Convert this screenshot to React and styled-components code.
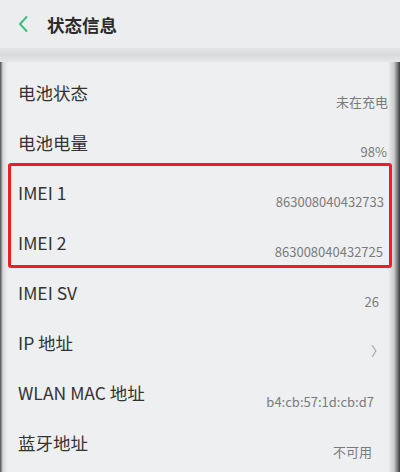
import styled, { createGlobalStyle } from 'styled-components';

const GlobalStyle = createGlobalStyle`
  html, body {
    margin: 0;
    padding: 0;
    background: #eeeff1;
  }
  body {
    font-family: "Noto Sans CJK SC", "Noto Sans", sans-serif;
  }
`;

const Screen = styled.div`
  width: 400px;
  height: 472px;
  overflow: hidden;
  background: linear-gradient(90deg, #4a4a4c 0, #d8d9db 3px, #eeeff1 8px, #eeeff1 388px, #c9cacc 394px, #3a3a3c 400px);
`;

const Header = styled.div`
  height: 48px;
  display: flex;
  align-items: center;
  padding-left: 17px;
  gap: 18px;
  background: #ecedef;
`;

const Title = styled.h1`
  margin: 0;
  font-size: 17.5px;
  font-weight: 700;
  color: #2a2a2a;
`;

const Band = styled.div`
  height: 14px;
  background: linear-gradient(180deg, #e3e4e6 0, #d9dadc 50%, #e6e7e9 100%);
`;

const List = styled.div`
  padding-top: 6px;
`;

const Group = styled.div`
  position: relative;

  &::after {
    content: '';
    position: absolute;
    top: -5px;
    bottom: 0;
    left: 8px;
    right: 8px;
    border: 3px solid #f21c24;
    border-radius: 3px;
    pointer-events: none;
  }
`;

const Row = styled.div`
  height: 50px;
  display: flex;
  justify-content: space-between;
  align-items: flex-start;
  padding: 0 ${(p) => p.$inset}px 0 18px;
`;

const Label = styled.span`
  padding-top: 13px;
  font-size: 17.5px;
  line-height: 24px;
  color: #333333;
`;

const Value = styled.span`
  margin-top: 26px;
  font-size: 13px;
  line-height: 16px;
  color: #7a7b7c;
`;

const Chevron = styled.span`
  margin-top: 25px;
  font-size: 13px;
  line-height: 16px;
  color: #9a9a9a;
`;

function BackIcon() {
  return (
    <svg width="12" height="18" viewBox="0 0 12 18">
      <path d="M9.5 2 L3 9 L9.5 16" fill="none" stroke="#3fbf7f" strokeWidth="2" strokeLinecap="round" strokeLinejoin="round" />
    </svg>
  );
}

function InfoRow({ label, value, inset = 13, arrow }) {
  return (
    <Row $inset={inset}>
      <Label>{label}</Label>
      {arrow ? <Chevron>〉</Chevron> : <Value>{value}</Value>}
    </Row>
  );
}

export default function App() {
  return (
    <>
      <GlobalStyle />
      <Screen>
        <Header>
          <BackIcon />
          <Title>状态信息</Title>
        </Header>
        <Band />
        <List>
          <InfoRow label="电池状态" value="未在充电" inset={12} />
          <InfoRow label="电池电量" value="98%" inset={13} />
          <Group>
            <InfoRow label="IMEI 1" value="863008040432733" inset={16} />
            <InfoRow label="IMEI 2" value="863008040432725" inset={17} />
          </Group>
          <InfoRow label="IMEI SV" value="26" inset={21} />
          <InfoRow label="IP 地址" arrow inset={16} />
          <InfoRow label="WLAN MAC 地址" value="b4:cb:57:1d:cb:d7" inset={26} />
          <InfoRow label="蓝牙地址" value="不可用" inset={28} />
        </List>
      </Screen>
    </>
  );
}
